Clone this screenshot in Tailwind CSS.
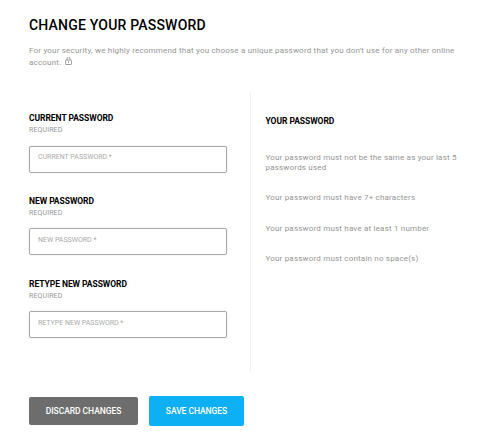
<!DOCTYPE html>
<html lang="en">

<head>
    <meta charset="UTF-8">
    <meta name="viewport" content="width=device-width, initial-scale=1.0">
    <title>Change Your Password</title>
    <script src="https://cdn.jsdelivr.net/npm/@tailwindcss/browser@4"></script>
</head>

<body class="bg-white font-['Roboto',sans-serif] text-[8px] text-[#959595] h-[441px] overflow-hidden">
    <main class="pl-[29px] pt-[16px]">
        <h1 class="text-[14px] leading-[18px] font-medium text-black tracking-[0.2px] whitespace-nowrap">CHANGE YOUR PASSWORD</h1>
        <p class="mt-[11px] leading-[11.5px] tracking-[0.2px] whitespace-nowrap">
            For your security, we highly recommend that you choose a unique password that you don't use for any other online<br>
            account.
            <svg class="inline-block ml-[1px] -mt-[3px] w-[7px] h-[8px]" viewBox="0 0 7 8" fill="none" stroke="#888888" stroke-width="0.8">
                <rect x="0.6" y="3" width="5.8" height="4.5" rx="0.4" />
                <path d="M1.9 3V2a1.6 1.6 0 0 1 3.2 0v1M3.5 4.3v1.8" />
            </svg>
        </p>

        <div class="mt-[24px] flex h-[280px]">
            <!-- Password form -->
            <form id="password-form" class="w-[222px] border-r border-[#f0f0f0] pt-[20px]">
                <div class="h-[83px]">
                    <label for="current-password" class="block text-[8.5px] leading-[12px] font-bold text-black tracking-[-0.05px]">CURRENT PASSWORD</label>
                    <span class="block text-[7px] leading-[12px] tracking-[0.12px]">REQUIRED</span>
                    <input type="password" id="current-password" class="block mt-[10px] w-[198px] h-[27px] border border-[#aaaaaa] shadow-[0_0_1px_#aaaaaa] rounded-[2px] pl-[8px] pb-[5px] text-[7px] placeholder:text-[#aaaaaa]" placeholder="CURRENT PASSWORD *">
                </div>
                <div class="h-[83px]">
                    <label for="new-password" class="block text-[8.5px] leading-[12px] font-bold text-black tracking-[-0.05px]">NEW PASSWORD</label>
                    <span class="block text-[7px] leading-[12px] tracking-[0.12px]">REQUIRED</span>
                    <input type="password" id="new-password" class="block mt-[9px] w-[198px] h-[27px] border border-[#aaaaaa] shadow-[0_0_1px_#aaaaaa] rounded-[2px] pl-[8px] pb-[4px] text-[7px] placeholder:text-[#aaaaaa]" placeholder="NEW PASSWORD *">
                </div>
                <div class="h-[83px]">
                    <label for="retype-password" class="block text-[8.5px] leading-[12px] font-bold text-black tracking-[-0.05px]">RETYPE NEW PASSWORD</label>
                    <span class="block text-[7px] leading-[12px] tracking-[0.12px]">REQUIRED</span>
                    <input type="password" id="retype-password" class="block mt-[9px] w-[198px] h-[27px] border border-[#aaaaaa] shadow-[0_0_1px_#aaaaaa] rounded-[2px] pl-[8px] pb-[4px] text-[7px] placeholder:text-[#aaaaaa]" placeholder="RETYPE NEW PASSWORD *">
                </div>
            </form>

            <!-- Password rules -->
            <section class="pl-[14.5px] pt-[23px] whitespace-nowrap">
                <h2 class="text-[8.5px] leading-[12px] font-bold text-black tracking-[-0.05px]">YOUR PASSWORD</h2>
                <ul class="mt-[25.5px] leading-[10px] tracking-[0.19px]">
                    <li>Your password must not be the same as your last 5<br>passwords used</li>
                    <li class="mt-[20.5px]">Your password must have 7+ characters</li>
                    <li class="mt-[20.5px]">Your password must have at least 1 number</li>
                    <li class="mt-[20.5px]">Your password must contain no space(s)</li>
                </ul>
            </section>
        </div>

        <div class="mt-[24px] flex items-center gap-[11px] text-white font-medium text-[8.5px]">
            <button type="button" class="w-[109px] h-[28px] bg-[#6d6d6d] rounded-[2px] tracking-[-0.05px]">DISCARD CHANGES</button>
            <button type="submit" form="password-form" class="w-[95px] h-[30px] bg-[#0db0f3] rounded-[2px] tracking-[-0.05px]">SAVE CHANGES</button>
        </div>
    </main>
</body>

</html>
